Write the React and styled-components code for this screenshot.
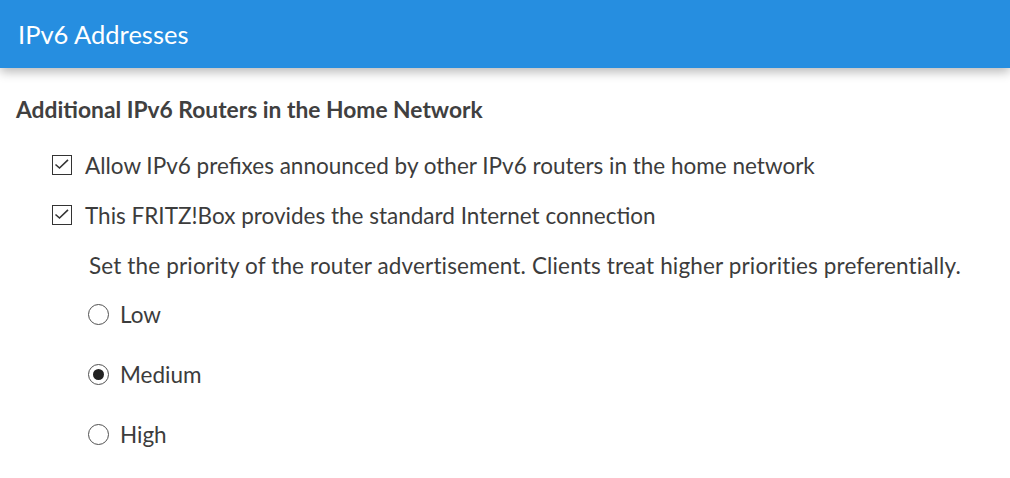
import React from 'react'
import styled, { createGlobalStyle } from 'styled-components'

const Global = createGlobalStyle`
  body {
    margin: 0;
    background: #fff;
    font-family: Lato, "Open Sans", sans-serif;
    color: #3c3c3c;
  }
`

const Header = styled.div`
  height: 68px;
  background: #268ee0;
  color: #fff;
  font-size: 25.5px;
  display: flex;
  align-items: center;
  padding-left: 18px;
  box-shadow: 0 4px 10px rgba(0, 0, 0, 0.28);
  position: relative;
`

const Content = styled.div`
  padding: 26px 16px 0 16px;
`

const Heading = styled.h2`
  margin: 0 0 16px 0;
  height: 30px;
  line-height: 30px;
  font-size: 22.8px;
  font-weight: 700;
  color: #404040;
`

const List = styled.div`
  display: flex;
  flex-direction: column;
  padding-left: 36px;
`

const Row = styled.label`
  display: flex;
  align-items: center;
  gap: ${p => p.gap || 13}px;
  height: ${p => p.h || 50}px;
  font-size: 22.5px;
`

const Box = styled.span`
  box-sizing: border-box;
  width: 20px;
  height: 20px;
  border: 1.5px solid #333;
  display: flex;
  flex: 0 0 auto;
`

const Note = styled.p`
  margin: 0;
  padding-left: 73px;
  font-size: 22.5px;
  letter-spacing: 0.15px;
  line-height: 52px;
`

const Radios = styled.div`
  padding-left: 72px;
  display: flex;
  flex-direction: column;
  gap: 16px;
`

const Circle = styled.span`
  box-sizing: border-box;
  width: 21px;
  height: 21px;
  border: 1.3px solid #505050;
  border-radius: 50%;
  display: flex;
  align-items: center;
  justify-content: center;
  flex: 0 0 auto;
  &::after {
    content: '';
    width: 11px;
    height: 11px;
    border-radius: 50%;
    background: ${p => (p.checked ? '#222' : 'transparent')};
  }
`

const Check = () => (
  <svg width="17" height="17" viewBox="0 0 17 17">
    <path d="M2.5 8.5 L6.5 12 L15 3.8" fill="none" stroke="#333" strokeWidth="1.6" />
  </svg>
)

export default function App() {
  const levels = ['Low', 'Medium', 'High']
  return (
    <>
      <Global />
      <Header>IPv6 Addresses</Header>
      <Content>
        <Heading>Additional IPv6 Routers in the Home Network</Heading>
        <List>
          <Row>
            <Box><Check /></Box>
            Allow IPv6 prefixes announced by other IPv6 routers in the home network
          </Row>
          <Row>
            <Box><Check /></Box>
            This FRITZ!Box provides the standard Internet connection
          </Row>
        </List>
        <Note>Set the priority of the router advertisement. Clients treat higher priorities preferentially.</Note>
        <Radios>
          {levels.map(l => (
            <Row key={l} h={44} gap={11}>
              <Circle checked={l === 'Medium'} />
              {l}
            </Row>
          ))}
        </Radios>
      </Content>
    </>
  )
}
